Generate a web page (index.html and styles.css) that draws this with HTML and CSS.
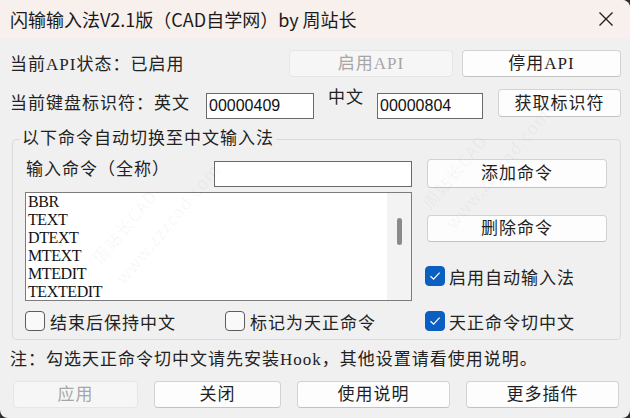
FILE: index.html
```html
<!DOCTYPE html>
<html lang="zh-CN">
<head>
<meta charset="utf-8">
<title>闪输输入法V2.1版</title>
<link rel="stylesheet" href="styles.css">
</head>
<body>
<div class="window">
  <header class="titlebar">
    <span class="title">闪输输入法V2.1版（CAD自学网）by 周站长</span>
    <span class="close" aria-label="关闭">
      <svg width="16" height="16" viewBox="0 0 16 16"><path d="M1.5 1.5 L14.5 14.5 M14.5 1.5 L1.5 14.5" stroke="#1c1c1c" stroke-width="1.3" fill="none"/></svg>
    </span>
  </header>

  <main class="content">
    <div class="api-row">
      <span class="label">当前API状态：已启用</span>
      <button class="btn" disabled>启用API</button>
      <button class="btn">停用API</button>
    </div>

    <div class="kbd-row">
      <span class="label">当前键盘标识符：英文</span>
      <input class="field" type="text" value="00000409">
      <span class="cn-label">中文</span>
      <input class="field" type="text" value="00000804">
      <button class="btn btn-id">获取标识符</button>
    </div>

    <fieldset class="group">
      <legend>以下命令自动切换至中文输入法</legend>
      <div class="cmd-grid">
        <div class="cmd-left">
          <div class="cmd-input-row">
            <span class="label">输入命令（全称）</span>
            <input class="field cmd-field" type="text" value="">
          </div>
          <div class="cmd-list">
            <ul class="items">
              <li>BBR</li>
              <li>TEXT</li>
              <li>DTEXT</li>
              <li>MTEXT</li>
              <li>MTEDIT</li>
              <li>TEXTEDIT</li>
            </ul>
            <div class="scroll-track"><div class="scroll-thumb"></div></div>
          </div>
        </div>
        <div class="cmd-right">
          <button class="btn btn-add">添加命令</button>
          <button class="btn btn-del">删除命令</button>
          <label class="check check-auto"><span class="box on"><svg width="12" height="10" viewBox="0 0 12 10"><path d="M1.5 5.2 L4.6 8.2 L10.6 1.6" stroke="#fff" stroke-width="1.2" fill="none"/></svg></span>启用自动输入法</label>
        </div>
      </div>
      <div class="check-row">
        <label class="check"><span class="box"></span>结束后保持中文</label>
        <label class="check"><span class="box"></span>标记为天正命令</label>
        <label class="check"><span class="box on"><svg width="12" height="10" viewBox="0 0 12 10"><path d="M1.5 5.2 L4.6 8.2 L10.6 1.6" stroke="#fff" stroke-width="1.2" fill="none"/></svg></span>天正命令切中文</label>
      </div>
    </fieldset>

    <p class="note">注：勾选天正命令切中文请先安装Hook，其他设置请看使用说明。</p>

    <div class="actions">
      <button class="btn" disabled>应用</button>
      <button class="btn">关闭</button>
      <button class="btn">使用说明</button>
      <button class="btn">更多插件</button>
    </div>
  </main>

  <div class="watermark wm-a" aria-hidden="true"><span>周站长CAD</span><span>www.zzzcad.com</span></div>
  <div class="watermark wm-b" aria-hidden="true"><span>周站长CAD</span><span>www.zzzcad.com</span></div>
</div>
</body>
</html>
```

FILE: styles.css
```css
* {
  box-sizing: border-box;
}

html,
body {
  margin: 0;
  padding: 0;
}

body {
  width: 630px;
  height: 418px;
  overflow: hidden;
  background: #2e2e2e;
}

.window {
  position: relative;
  width: 630px;
  height: 418px;
  overflow: hidden;
  background: #f0f0f0;
  border-radius: 0 8px 8px 8px;
  font-family: "Liberation Serif", "Noto Sans CJK SC", serif;
  font-size: 17px;
  letter-spacing: 1px;
  color: #222;
}

/* title bar */
.titlebar {
  height: 38px;
  display: flex;
  align-items: center;
  padding-left: 10px;
  background: #f8f0ed;
}

.title {
  flex: 1;
  font-family: "Noto Sans CJK SC", sans-serif;
  font-size: 18px;
  letter-spacing: 0;
  color: #1a1a1a;
  line-height: 38px;
}

.close {
  width: 46px;
  height: 38px;
  margin-right: 1px;
  display: flex;
  align-items: center;
  justify-content: center;
}

/* body */
.content {
  padding: 12px 9px 0 10px;
}

.label {
  white-space: nowrap;
}

.btn {
  font: inherit;
  letter-spacing: 1px;
  color: #1f1f1f;
  background: #fdfdfd;
  border: 1px solid #d3d3d3;
  border-bottom-color: #c2c2c2;
  border-radius: 4px;
  padding: 0;
  line-height: 1;
}

.btn:disabled {
  color: #a6a6a6;
  background: #f6f6f6;
  border-color: #e6e6e6;
}

.field {
  height: 26px;
  border: 1px solid #6a6a6a;
  background: #fff;
  padding: 0 0 0 2px;
  margin: 0;
  font-family: "Liberation Sans", sans-serif;
  font-size: 16px;
  letter-spacing: 0;
  color: #111;
  outline: none;
}

.api-row {
  display: grid;
  grid-template-columns: 270px 164px 159px;
  column-gap: 9px;
  height: 27px;
  align-items: center;
}

.api-row .label {
  margin-top: -2px;
}

.api-row .btn {
  height: 27px;
}

.kbd-row {
  margin-top: 12px;
  display: grid;
  grid-template-columns: 196px 108px 63px 106px 1fr;
  height: 30px;
}

.kbd-row .label {
  line-height: 30px;
}

.kbd-row .field {
  align-self: end;
}

.cn-label {
  padding-left: 14px;
  line-height: 18px;
}

.btn-id {
  justify-self: end;
  align-self: start;
  width: 123px;
  height: 28px;
}

/* command group */
.group {
  margin: 9px 0 0 2px;
  width: 609px;
  height: 212px;
  border: 1px solid #dadada;
  border-radius: 4px;
  padding: 9px 13px 0 12px;
  min-width: 0;
}

.group legend {
  padding: 0 2px;
  margin-left: -5px;
  line-height: 22px;
}

.cmd-grid {
  display: grid;
  grid-template-columns: 387px 180px;
  column-gap: 15px;
}

.cmd-input-row {
  height: 29px;
  display: flex;
  justify-content: space-between;
}

.cmd-input-row .label {
  padding-left: 1px;
  line-height: 22px;
}

.cmd-field {
  width: 198px;
  margin-top: 2px;
}

.cmd-list {
  margin-top: 4px;
  height: 109px;
  display: flex;
  border: 1px solid #7c7c7c;
  background: #fff;
}

.items {
  flex: 1;
  list-style: none;
  margin: 0;
  padding: 0 0 0 2px;
  font-family: "Liberation Serif", serif;
  font-size: 16px;
  letter-spacing: -0.4px;
  line-height: 18px;
  color: #111;
}

.scroll-track {
  width: 24px;
  background: #f3f3f3;
  padding: 25px 0 0 10px;
}

.scroll-thumb {
  width: 5px;
  height: 27px;
  border-radius: 3px;
  background: #8a8a8a;
}

.cmd-right {
  display: flex;
  flex-direction: column;
  align-items: stretch;
}

.btn-add {
  height: 29px;
}

.btn-del {
  margin-top: 27px;
  height: 27px;
}

.check {
  display: flex;
  align-items: center;
  gap: 5px;
  height: 20px;
  white-space: nowrap;
}

.check-auto {
  margin-top: 24px;
  margin-left: -2px;
  gap: 4px;
}

.box {
  flex: none;
  width: 20px;
  height: 20px;
  border: 1px solid #5c5c5c;
  border-radius: 4px;
  background: #f9f9f9;
  display: flex;
  align-items: center;
  justify-content: center;
}

.box.on {
  background: #0b5fc0;
  border-color: #0b5fc0;
}

.check-row {
  margin-top: 10px;
  display: grid;
  grid-template-columns: 200px 200px 1fr;
}

.check-row .check:last-child {
  gap: 4px;
}

.note {
  margin: 9px 0 0;
  line-height: 22px;
  white-space: nowrap;
}

.actions {
  margin-top: 10px;
  padding-left: 3px;
  display: grid;
  grid-template-columns: 125px 127px 153px 153px;
  column-gap: 16px;
}

.actions .btn {
  height: 27px;
}

/* faint site stamp drawn across the dialog */
.watermark {
  position: absolute;
  display: flex;
  flex-direction: column;
  gap: 6px;
  transform: rotate(-50deg);
  font-family: "Noto Sans CJK SC", sans-serif;
  font-size: 17px;
  letter-spacing: 1px;
  color: rgba(0, 0, 0, 0.045);
  pointer-events: none;
  white-space: nowrap;
}

.wm-a {
  left: 80px;
  top: 185px;
}

.wm-b {
  left: 410px;
  top: 130px;
}
```
